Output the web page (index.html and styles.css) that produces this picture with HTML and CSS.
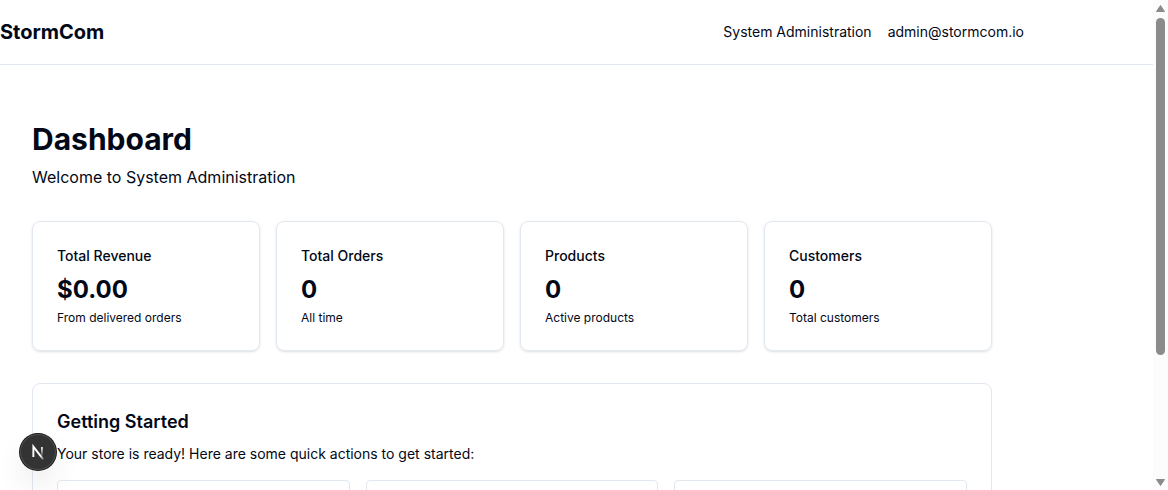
FILE: index.html
```html
<!DOCTYPE html>
<html lang="en">
<head>
  <meta charset="utf-8">
  <meta name="viewport" content="width=device-width, initial-scale=1">
  <title>StormCom</title>
  <link rel="stylesheet" href="styles.css">
</head>
<body>
  <div class="window">
    <div class="page">
      <header class="header">
        <div class="header-inner">
          <div class="brand">StormCom</div>
          <div class="account">
            <span>System Administration</span>
            <span>admin@stormcom.io</span>
          </div>
        </div>
      </header>
      <main class="main">
        <div class="intro">
          <h1 class="title">Dashboard</h1>
          <p class="subtitle">Welcome to System Administration</p>
        </div>
        <div class="stats">
          <section class="stat">
            <h2 class="stat-label">Total Revenue</h2>
            <p class="stat-value">$0.00</p>
            <p class="stat-note">From delivered orders</p>
          </section>
          <section class="stat">
            <h2 class="stat-label">Total Orders</h2>
            <p class="stat-value">0</p>
            <p class="stat-note">All time</p>
          </section>
          <section class="stat">
            <h2 class="stat-label">Products</h2>
            <p class="stat-value">0</p>
            <p class="stat-note">Active products</p>
          </section>
          <section class="stat">
            <h2 class="stat-label">Customers</h2>
            <p class="stat-value">0</p>
            <p class="stat-note">Total customers</p>
          </section>
        </div>
        <section class="start">
          <h2 class="start-title">Getting Started</h2>
          <p class="start-text">Your store is ready! Here are some quick actions to get started:</p>
          <div class="actions">
            <div class="action"></div>
            <div class="action"></div>
            <div class="action"></div>
          </div>
        </section>
      </main>
    </div>
    <div class="scrollbar" aria-hidden="true">
      <svg class="arrow" viewBox="0 0 9 7"><path d="M4.5 0.5 L8.5 6.5 H0.5 Z"/></svg>
      <div class="track"><div class="thumb"></div></div>
      <svg class="arrow" viewBox="0 0 9 7"><path d="M4.5 6.5 L0.5 0.5 H8.5 Z"/></svg>
    </div>
  </div>
  <button class="devtools" type="button" aria-label="Open Next.js Dev Tools">
    <svg width="36" height="36" viewBox="0 0 40 40" fill="none">
      <defs>
        <linearGradient id="diagonal" x1="9.95" y1="11.14" x2="15.16" y2="17.6" gradientUnits="userSpaceOnUse">
          <stop stop-color="white"/>
          <stop offset="0.9" stop-color="white" stop-opacity="0"/>
        </linearGradient>
        <linearGradient id="stem" x1="11.82" y1="1.5" x2="11.79" y2="12.4" gradientUnits="userSpaceOnUse">
          <stop stop-color="white"/>
          <stop offset="1" stop-color="white" stop-opacity="0"/>
        </linearGradient>
      </defs>
      <g transform="translate(12.5 13)">
        <path d="M13.3 15.2 L2.34 1 V12.6" stroke="url(#diagonal)" stroke-width="2.1"/>
        <path d="M11.825 1.5 V13.1" stroke="url(#stem)" stroke-width="2"/>
      </g>
    </svg>
  </button>
</body>
</html>
```

FILE: styles.css
```css
* {
  box-sizing: border-box;
}

body,
h1,
h2,
p {
  margin: 0;
}

body {
  background: #fff;
  color: #020817;
  font-family: Inter, "Liberation Sans", sans-serif;
  font-size: 16px;
  line-height: 24px;
}

.window {
  display: flex;
  height: 100vh;
  overflow: hidden;
}

.page {
  flex: 1;
  min-width: 0;
  overflow: hidden;
}

.header {
  border-bottom: 1px solid #e2e8f0;
}

.header-inner {
  display: flex;
  align-items: center;
  justify-content: space-between;
  max-width: 1024px;
  padding: 18px 0;
}

.brand {
  font-size: 20px;
  font-weight: 700;
  line-height: 28px;
}

.account {
  display: flex;
  gap: 16px;
  font-size: 14px;
  line-height: 20px;
}

.main {
  display: grid;
  gap: 32px;
  max-width: 1024px;
  padding: 56px 32px;
}

.title {
  margin-bottom: 8px;
  font-size: 30px;
  font-weight: 700;
  line-height: 36px;
}

.stats {
  display: grid;
  grid-template-columns: repeat(4, 1fr);
  gap: 16px;
}

.stat {
  padding: 24px;
  border: 1px solid #e2e8f0;
  border-radius: 8px;
  box-shadow: 0 1px 3px rgba(0, 0, 0, 0.1), 0 1px 2px -1px rgba(0, 0, 0, 0.1);
}

.stat-label {
  margin-bottom: 8px;
  font-size: 14px;
  font-weight: 500;
  line-height: 20px;
}

.stat-value {
  margin-bottom: 4px;
  font-size: 24px;
  font-weight: 700;
  line-height: 32px;
}

.stat-note {
  font-size: 12px;
  line-height: 16px;
}

.start {
  padding: 24px;
  border: 1px solid #e2e8f0;
  border-radius: 8px;
}

.start-title {
  margin-bottom: 8px;
  font-size: 18px;
  font-weight: 600;
  line-height: 28px;
}

.start-text {
  margin-bottom: 16px;
  font-size: 14px;
  line-height: 20px;
}

.actions {
  display: grid;
  grid-template-columns: repeat(3, 1fr);
  gap: 16px;
}

.action {
  min-height: 88px;
  border: 1px solid #e2e8f0;
  border-radius: 4px;
}

.scrollbar {
  display: flex;
  flex-direction: column;
  align-items: center;
  gap: 6px;
  width: 15px;
  padding: 5px 0 4px;
  background: #fcfcfc;
}

.arrow {
  width: 9px;
  height: 7px;
  fill: #8b8b8b;
  stroke: #8b8b8b;
  stroke-linejoin: round;
}

.track {
  flex: 1;
}

.thumb {
  width: 9px;
  height: 74%;
  border-radius: 5px;
  background: #8b8b8b;
}

.devtools {
  position: fixed;
  bottom: 20px;
  left: 20px;
  width: 36px;
  height: 36px;
  padding: 0;
  border: 0;
  border-radius: 50%;
  background: #333;
  box-shadow: 0 0 0 1px #171717, inset 0 0 0 1px rgba(255, 255, 255, 0.14), 0 16px 32px -8px rgba(0, 0, 0, 0.24);
}

.devtools svg {
  display: block;
}
```
